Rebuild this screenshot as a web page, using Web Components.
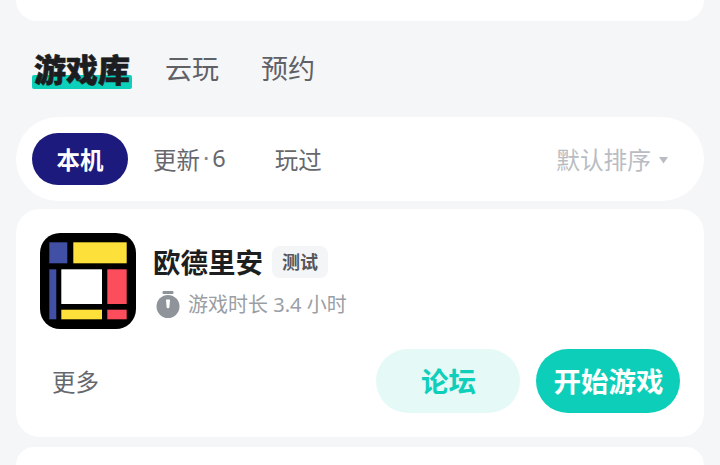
<!DOCTYPE html>
<html lang="zh-CN"><head><meta charset="utf-8">
<style>
html,body{margin:0;padding:0;height:465px;overflow:hidden;background:#f5f6f8;font-family:"Noto Sans","Noto Sans CJK SC",sans-serif}
</style></head><body>
<game-page>
  <game-tabs></game-tabs>
  <filter-bar></filter-bar>
  <game-card name="欧德里安" tag="测试" time="游戏时长 3.4 小时"></game-card>
</game-page>
<script>
function def(name,html,init){
  customElements.define(name,class extends HTMLElement{
    constructor(){super();this.attachShadow({mode:'open'}).innerHTML=html;}
    connectedCallback(){if(init)init(this,this.shadowRoot);}
  });
}
def('game-page',`<style>
:host{display:flex;flex-direction:column;height:465px;padding:0 16px;box-sizing:border-box;overflow:hidden}
.top{height:21px;flex:none;background:#fff;border-radius:0 0 24px 24px}
.next{height:18px;flex:none;margin-top:10px;background:#fff;border-radius:24px 24px 0 0}
</style><div class="top"></div><slot></slot><div class="next"></div>`);

def('game-tabs',`<style>
:host{display:flex;flex:none;height:96px;align-items:center;padding:0 0 2px 18px;box-sizing:border-box;font-family:"Noto Sans CJK SC",sans-serif;color:#5f6166;font-size:27px;line-height:40px}
.a{position:relative;font-size:32px;font-weight:900;color:#1c1d20;margin-right:35px;width:96px;white-space:nowrap;line-height:40px;-webkit-text-stroke:.6px #1c1d20}
.a i{position:absolute;left:-2px;right:-2px;top:27px;height:14px;background:#0dd0bb;border-radius:2px;}
.a span{position:relative}
.b{margin-right:42px;white-space:nowrap}
</style><div class="a"><i></i><span>游戏库</span></div><div class="b">云玩</div><div class="b">预约</div>`);

def('filter-bar',`<style>
:host{display:flex;height:84px;flex:none;align-items:center;background:#fff;border-radius:42px;padding:0 35px 0 16px;box-sizing:border-box;font-family:"Noto Sans","Noto Sans CJK SC",sans-serif;font-size:23.5px;color:#66686d}
.on{width:96px;height:52px;border-radius:26px;background:#1c1a7c;color:#fff;font-weight:700;display:flex;align-items:center;justify-content:center;margin-right:25px;font-size:23.5px;padding-bottom:1px;box-sizing:border-box}
.u{display:flex;white-space:nowrap}
.u1{margin-right:49px}
.dot{margin:0 3px 0 3px;color:#85878c}
.s{margin-left:auto;color:#b9bdc3;display:flex;align-items:center;gap:7px;white-space:nowrap;font-size:23.7px}
svg{display:block;width:11px;height:8px;margin-top:1px}
</style><div class="on">本机</div><div class="u u1"><span>更新</span><span class="dot">·</span><span>6</span></div><div class="u">玩过</div>
<div class="s">默认排序<svg viewBox="0 0 11 8"><path d="M1 1h9L5.5 7.5z" fill="#b9bdc3"/></svg></div>`);

def('game-card',`<style>
:host{display:flex;flex-direction:column;flex:none;height:228px;margin-top:8px;background:#fff;border-radius:24px;padding:24px;box-sizing:border-box;font-family:"Noto Sans","Noto Sans CJK SC",sans-serif}
.head{display:flex;gap:17px}
.icon{width:96px;height:96px;display:block;flex:none}
.info{display:flex;flex-direction:column;padding-top:13px}
.title{display:flex;align-items:center;gap:9px;height:32px}
.name{font-size:27.5px;font-weight:700;color:#1d1e20;font-family:"Noto Sans CJK SC",sans-serif;white-space:nowrap;margin-top:-3px}
.tag{width:56px;height:32px;border-radius:8px;background:#f4f5f7;color:#55575c;font-size:18px;font-weight:700;display:flex;align-items:center;justify-content:center;font-family:"Noto Sans CJK SC",sans-serif;padding-bottom:3px;box-sizing:border-box}
.meta{display:flex;align-items:center;gap:8px;margin-top:12px;margin-left:3px;color:#9a9ea5;font-size:20px;height:30px;white-space:nowrap}
.meta svg{width:24px;height:28px;flex:none}
.time{margin-top:-3px}
.foot{display:flex;align-items:center;margin-top:20px;gap:16px}
.more{margin-right:auto;margin-left:12px;font-size:23.5px;color:#66686d;white-space:nowrap}
.btn{width:144px;height:64px;border-radius:32px;display:flex;align-items:center;justify-content:center;font-size:27.5px;font-weight:700;font-family:"Noto Sans CJK SC",sans-serif;white-space:nowrap;padding:0 0 2px 1px;box-sizing:border-box}
.l{background:#e5f9f7;color:#0fcfba}
.p{background:#0dcfb9;color:#fff}
</style>
<div class="head">
<svg class="icon" viewBox="0 0 96 96">
<rect width="96" height="96" rx="20" fill="#000"/>
<rect x="9.3" y="9.3" width="18" height="21" fill="#4150a4"/>
<rect x="33.3" y="9.3" width="53.4" height="21" fill="#fde03a"/>
<rect x="9.3" y="36.3" width="7" height="50" fill="#4150a4"/>
<rect x="21.3" y="36.3" width="40.7" height="34.7" fill="#fff"/>
<rect x="67.3" y="36.3" width="19.4" height="34.7" fill="#fb4d5b"/>
<rect x="21.3" y="76.7" width="40.7" height="9.6" fill="#fde03a"/>
<rect x="67.3" y="76.7" width="19.4" height="9.6" fill="#fb4d5b"/>
</svg>
<div class="info">
<div class="title"><span class="name"></span><span class="tag"></span></div>
<div class="meta"><svg viewBox="0 0 24 28"><rect x="6.5" y="0" width="11" height="3" rx="1.2" fill="#8f949b"/><circle cx="12" cy="15.5" r="11.5" fill="#8f949b"/><path d="M10 8.5h4l-.6 7.8a1.5 1.5 0 0 1-2.8 0z" fill="#fff"/></svg><span class="time"></span></div>
</div></div>
<div class="foot"><span class="more">更多</span><span class="btn l">论坛</span><span class="btn p">开始游戏</span></div>`,
(h,s)=>{s.querySelector('.name').textContent=h.getAttribute('name');s.querySelector('.tag').textContent=h.getAttribute('tag');s.querySelector('.time').textContent=h.getAttribute('time');});
</script>
</body></html>
